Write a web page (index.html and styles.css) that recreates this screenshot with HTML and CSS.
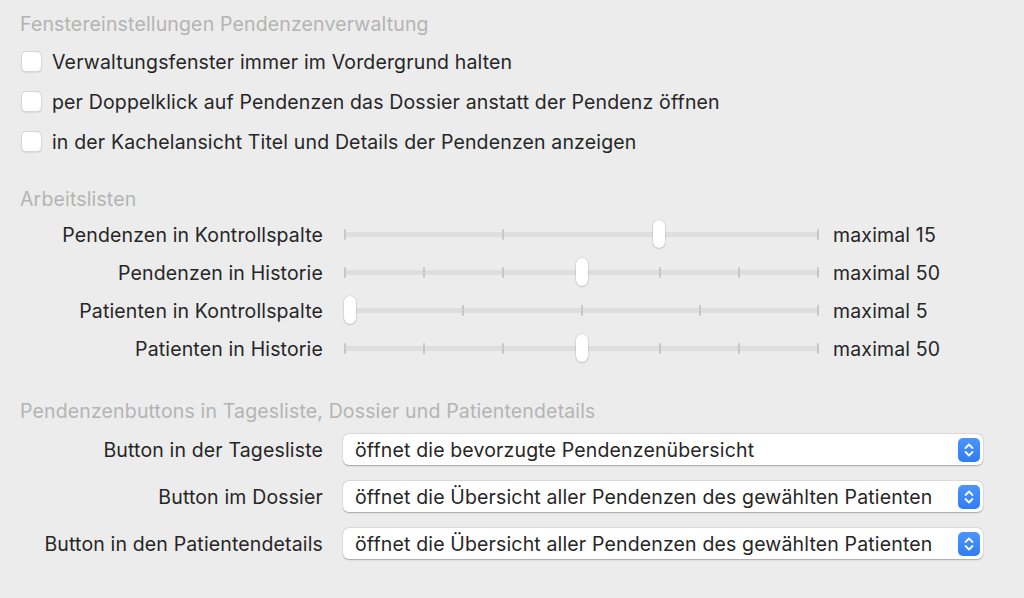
FILE: index.html
```html
<!DOCTYPE html>
<html lang="de">
<head>
<meta charset="utf-8">
<title>Pendenzenverwaltung</title>
<link rel="stylesheet" href="styles.css">
</head>
<body>
<div class="pane">
  <section class="group group-window">
    <h2 class="group-title">Fenstereinstellungen Pendenzenverwaltung</h2>
    <ul class="checks">
      <li class="check-row"><span class="checkbox"></span><span class="check-label">Verwaltungsfenster immer im Vordergrund halten</span></li>
      <li class="check-row"><span class="checkbox"></span><span class="check-label">per Doppelklick auf Pendenzen das Dossier anstatt der Pendenz öffnen</span></li>
      <li class="check-row"><span class="checkbox"></span><span class="check-label">in der Kachelansicht Titel und Details der Pendenzen anzeigen</span></li>
    </ul>
  </section>

  <section class="group group-lists">
    <h2 class="group-title">Arbeitslisten</h2>
    <div class="slider-grid">
      <div class="form-label">Pendenzen in Kontrollspalte</div>
      <div class="slider">
        <div class="track"><span class="tick"></span><span class="tick"></span><span class="tick"></span><span class="tick"></span></div>
        <span class="knob" style="left:308.7px"></span>
      </div>
      <div class="slider-value">maximal 15</div>

      <div class="form-label">Pendenzen in Historie</div>
      <div class="slider">
        <div class="track"><span class="tick"></span><span class="tick"></span><span class="tick"></span><span class="tick"></span><span class="tick"></span><span class="tick"></span><span class="tick"></span></div>
        <span class="knob" style="left:231.5px"></span>
      </div>
      <div class="slider-value">maximal 50</div>

      <div class="form-label">Patienten in Kontrollspalte</div>
      <div class="slider">
        <div class="track"><span class="tick"></span><span class="tick"></span><span class="tick"></span><span class="tick"></span><span class="tick"></span></div>
        <span class="knob" style="left:0px"></span>
      </div>
      <div class="slider-value">maximal 5</div>

      <div class="form-label">Patienten in Historie</div>
      <div class="slider">
        <div class="track"><span class="tick"></span><span class="tick"></span><span class="tick"></span><span class="tick"></span><span class="tick"></span><span class="tick"></span><span class="tick"></span></div>
        <span class="knob" style="left:231.5px"></span>
      </div>
      <div class="slider-value">maximal 50</div>
    </div>
  </section>

  <section class="group group-buttons">
    <h2 class="group-title">Pendenzenbuttons in Tagesliste, Dossier und Patientendetails</h2>
    <div class="popup-grid">
      <div class="form-label">Button in der Tagesliste</div>
      <div class="popup"><span class="popup-text">öffnet die bevorzugte Pendenzenübersicht</span><span class="stepper"><svg viewBox="0 0 22 24" width="22" height="24"><path d="M7.5 10 L11 6.5 L14.5 10 M7.5 14 L11 17.5 L14.5 14" fill="none" stroke="#fff" stroke-width="1.8" stroke-linecap="round" stroke-linejoin="round"/></svg></span></div>

      <div class="form-label">Button im Dossier</div>
      <div class="popup"><span class="popup-text">öffnet die Übersicht aller Pendenzen des gewählten Patienten</span><span class="stepper"><svg viewBox="0 0 22 24" width="22" height="24"><path d="M7.5 10 L11 6.5 L14.5 10 M7.5 14 L11 17.5 L14.5 14" fill="none" stroke="#fff" stroke-width="1.8" stroke-linecap="round" stroke-linejoin="round"/></svg></span></div>

      <div class="form-label">Button in den Patientendetails</div>
      <div class="popup"><span class="popup-text">öffnet die Übersicht aller Pendenzen des gewählten Patienten</span><span class="stepper"><svg viewBox="0 0 22 24" width="22" height="24"><path d="M7.5 10 L11 6.5 L14.5 10 M7.5 14 L11 17.5 L14.5 14" fill="none" stroke="#fff" stroke-width="1.8" stroke-linecap="round" stroke-linejoin="round"/></svg></span></div>
    </div>
  </section>
</div>
</body>
</html>
```

FILE: styles.css
```css
html, body {
  margin: 0;
  padding: 0;
  background: #ececec;
}
body {
  width: 1024px;
  height: 598px;
  overflow: hidden;
  font-family: Inter, "Liberation Sans", sans-serif;
  font-size: 19.5px;
  letter-spacing: 0.15px;
  color: #262626;
}
.pane {
  padding: 13px 0 0 20px;
}
.group-title {
  margin: 0;
  font-size: 19.5px;
  font-weight: 400;
  line-height: 22px;
  height: 22px;
  color: #b4b4b4;
  white-space: nowrap;
}
.checks {
  list-style: none;
  margin: 7px 0 0 0;
  padding: 0;
}
.check-row {
  display: flex;
  align-items: center;
  height: 40px;
  gap: 10px;
}
.checkbox {
  box-sizing: border-box;
  flex: none;
  width: 21px;
  height: 21px;
  margin-left: 1px;
  margin-top: -2px;
  border-radius: 5px;
  background: #fff;
  border: 1px solid #d6d6d6;
  box-shadow: 0 0.5px 1px rgba(0,0,0,0.08);
}
.check-label {
  white-space: nowrap;
}
.group-lists {
  margin-top: 26px;
}
.slider-grid {
  display: grid;
  grid-template-columns: 303px 496px auto;
  grid-auto-rows: 38px;
  margin-top: 6px;
  align-items: center;
}
.form-label {
  text-align: right;
  white-space: nowrap;
}
.slider {
  position: relative;
  height: 38px;
  margin-left: 21px;
  width: 475px;
}
.track {
  position: absolute;
  left: 0;
  right: 0;
  top: 16px;
  height: 5px;
  background: #dedede;
  border-radius: 2px;
  display: flex;
  justify-content: space-between;
  align-items: center;
}
.tick {
  width: 2px;
  height: 11px;
  border-radius: 1px;
  background: #c7c7c7;
}
.knob {
  position: absolute;
  top: 4px;
  width: 12px;
  height: 28px;
  border-radius: 6px;
  background: #fff;
  box-shadow: 0 0.5px 1.5px rgba(0,0,0,0.3), 0 0 0 0.5px rgba(0,0,0,0.06);
}
.slider-value {
  margin-left: 14px;
  white-space: nowrap;
}
.group-buttons {
  margin-top: 32px;
}
.popup-grid {
  display: grid;
  grid-template-columns: 303px 640px;
  grid-auto-rows: 47px;
  column-gap: 20px;
  margin-top: 4px;
  align-items: center;
}
.popup {
  box-sizing: border-box;
  height: 31px;
  display: flex;
  align-items: center;
  justify-content: space-between;
  padding: 0 3px 0 12px;
  background: #fff;
  border-radius: 6px;
  box-shadow: 0 0.5px 1.5px rgba(0,0,0,0.28), 0 0 0 0.5px rgba(0,0,0,0.05);
}
.popup-text {
  white-space: nowrap;
}
.stepper {
  flex: none;
  width: 22px;
  height: 24px;
  border-radius: 5px;
  background: linear-gradient(#4b94f9, #2f7df4);
  display: flex;
}
.stepper svg {
  display: block;
}
```
